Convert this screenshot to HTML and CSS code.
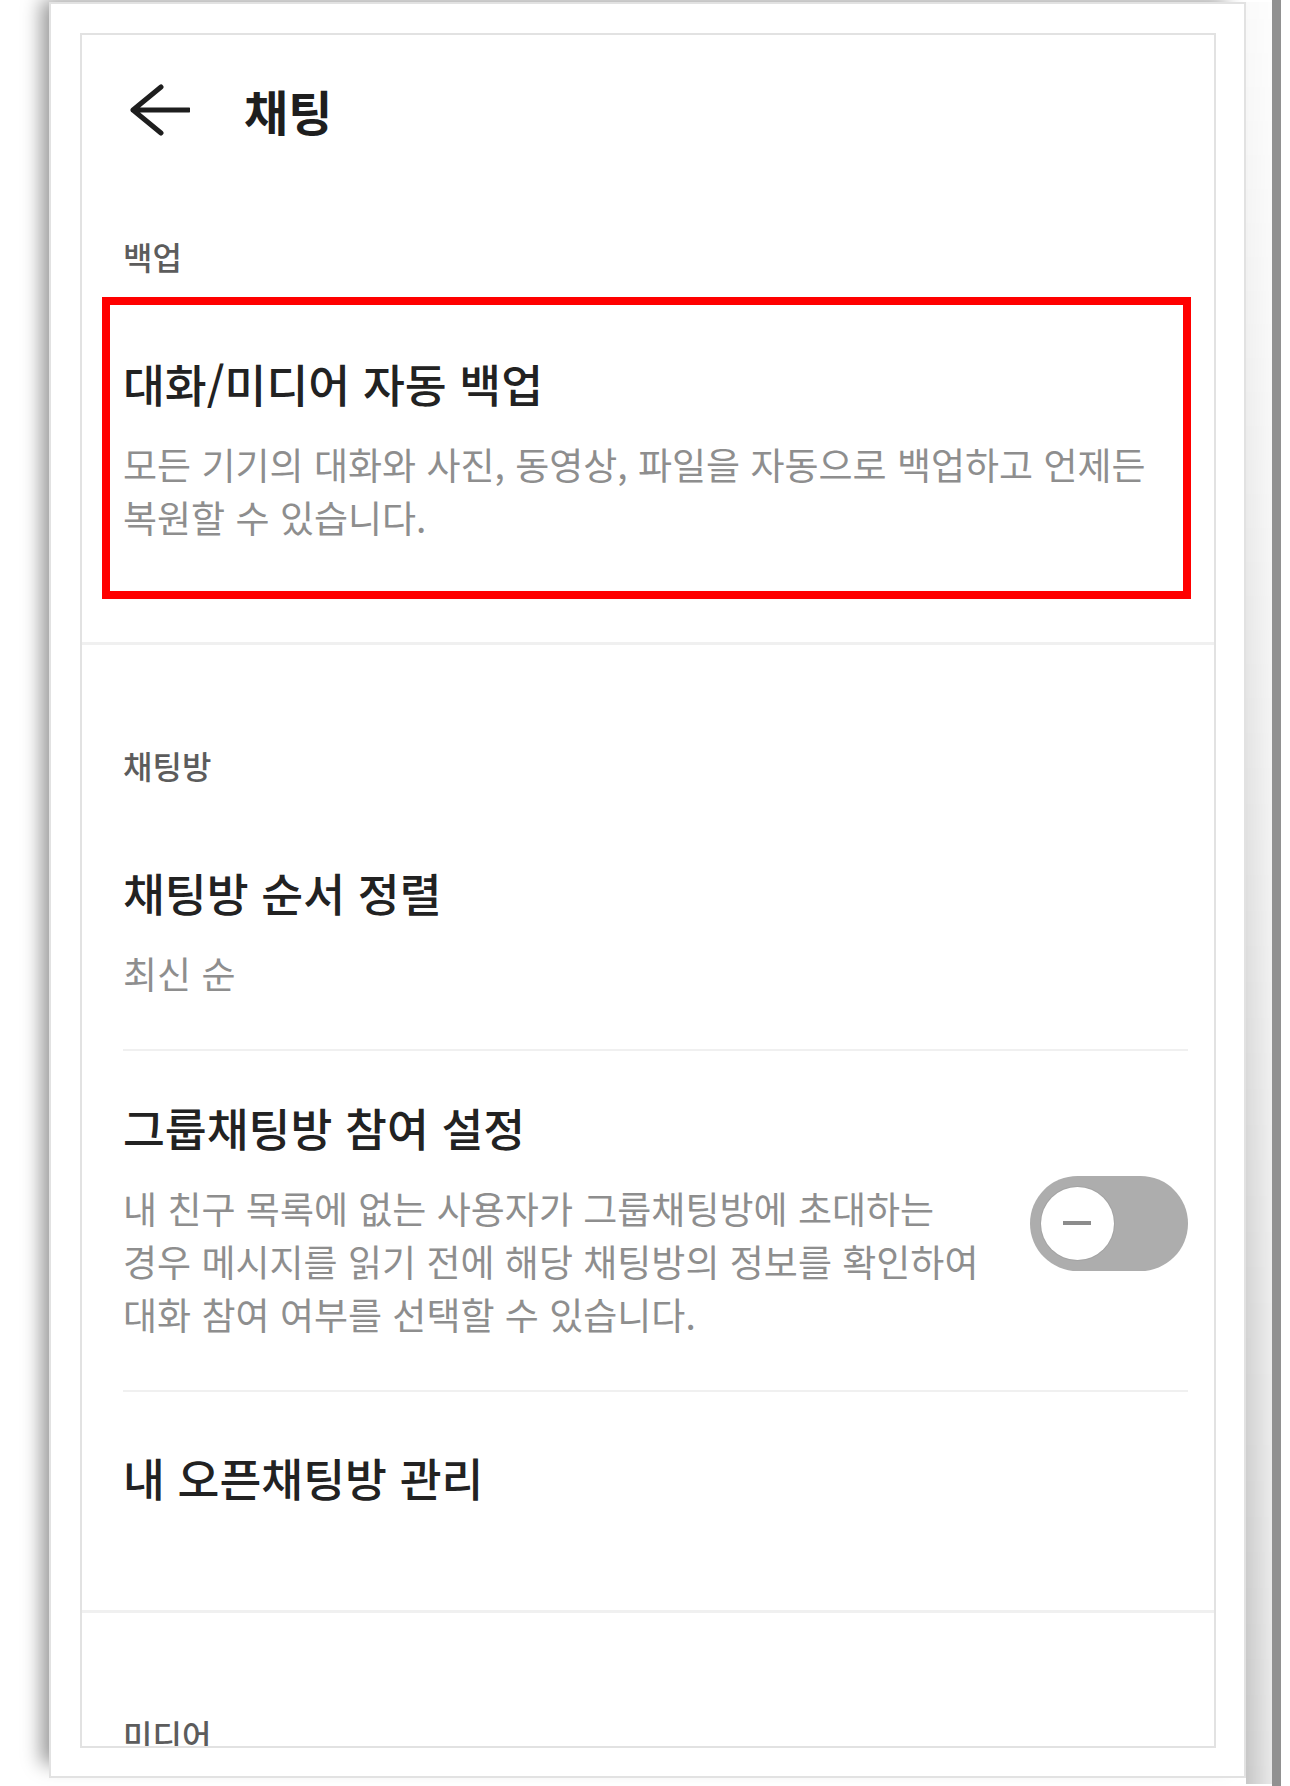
FILE: index.html
```html
<!DOCTYPE html>
<html lang="ko">
<head>
    <meta charset="UTF-8">
    <meta name="viewport" content="width=device-width, initial-scale=1.0">
    <title>채팅 설정</title>
    <link rel="stylesheet" href="styles.css">
</head>
<body>
    <div class="frame">
        <div class="screen">
            <header class="topbar">
                <svg class="back" width="60" height="52" viewBox="0 0 60 52" aria-hidden="true">
                    <path d="M31 3 L3 26 L31 49 M3 26 H59" />
                </svg>
                <h1>채팅</h1>
            </header>

            <!-- 백업 -->
            <section class="group group-first">
                <h2 class="group-label">백업</h2>
                <div class="item item-marked">
                    <div class="item-title">대화/미디어 자동 백업</div>
                    <p class="item-desc">모든 기기의 대화와 사진, 동영상, 파일을 자동으로 백업하고 언제든 복원할 수 있습니다.</p>
                </div>
            </section>

            <!-- 채팅방 -->
            <section class="group">
                <h2 class="group-label">채팅방</h2>
                <div class="item">
                    <div class="item-title">채팅방 순서 정렬</div>
                    <p class="item-desc">최신 순</p>
                </div>
                <div class="item item-switch">
                    <div class="item-text">
                        <div class="item-title">그룹채팅방 참여 설정</div>
                        <p class="item-desc">내 친구 목록에 없는 사용자가 그룹채팅방에 초대하는 경우 메시지를 읽기 전에 해당 채팅방의 정보를 확인하여 대화 참여 여부를 선택할 수 있습니다.</p>
                    </div>
                    <span class="switch"><span class="knob"></span></span>
                </div>
                <div class="item item-last">
                    <div class="item-title">내 오픈채팅방 관리</div>
                </div>
            </section>

            <!-- 미디어 -->
            <section class="group group-media">
                <h2 class="group-label">미디어</h2>
            </section>
        </div>
    </div>
</body>
</html>
```

FILE: styles.css
```css
:root {
    --text-strong: #222;
    --text-label: #5c5c5c;
    --text-sub: #8e8e8e;
    --line: #f0f0f0;
    --frame-line: #e2e2e2;
}

* {
    margin: 0;
    padding: 0;
    box-sizing: border-box;
}

body {
    width: 1290px;
    height: 1786px;
    overflow: hidden;
    padding-top: 2px;
    font-family: "Noto Sans CJK KR", "Noto Sans", sans-serif;
    word-break: keep-all;
    color: var(--text-strong);
    background: linear-gradient(90deg, #fff 1272px, #919191 1272px, #919191 1281px, #fff 1281px);
}

.frame {
    position: relative;
    width: 1197px;
    height: 1776px;
    margin-left: 49px;
    padding: 29px 28px 28px 29px;
    background: #fff;
    border: 2px solid var(--frame-line);
    box-shadow: -14px -8px 18px -6px rgba(0,0,0,0.4);
}

/* soft shadow on the right, darker towards the bottom */
.frame::after {
    content: "";
    position: absolute;
    top: -2px;
    right: -28px;
    bottom: -8px;
    width: 26px;
    background: linear-gradient(180deg, rgba(0,0,0,0.02), rgba(0,0,0,0.1) 40%, rgba(0,0,0,0.22));
    -webkit-mask-image: linear-gradient(90deg, #000, rgba(0,0,0,0.4));
    mask-image: linear-gradient(90deg, #000, rgba(0,0,0,0.4));
}

.screen {
    height: 100%;
    border: 2px solid var(--frame-line);
    overflow: hidden;
}

.topbar {
    height: 150px;
    display: flex;
    align-items: center;
    gap: 54px;
    padding-left: 48px;
}

.back {
    flex: none;
    fill: none;
    stroke: #1e1e1e;
    stroke-width: 5;
    stroke-linecap: round;
    stroke-linejoin: round;
}

.topbar h1 {
    font-size: 48px;
    font-weight: 700;
    line-height: 1;
    color: #1e1e1e;
}

.group {
    padding: 100px 26px 43px 41px;
    border-bottom: 3px solid var(--line);
}

.group-first {
    padding-top: 51px;
}

.group-media {
    padding-top: 101px;
    border-bottom: none;
}

.group-label {
    font-size: 32px;
    font-weight: 500;
    line-height: 40px;
    color: var(--text-label);
    margin-bottom: 31px;
}

.item {
    padding: 48px 0 49px;
    border-bottom: 2px solid var(--line);
}

.item-title {
    font-size: 45.5px;
    font-weight: 500;
    line-height: 56px;
    color: var(--text-strong);
}

.item-desc {
    margin-top: 27px;
    font-size: 37px;
    line-height: 53px;
    color: var(--text-sub);
}

.item-marked {
    margin: -10px -3px 0 -21px;
    padding: 50px 0 47px 13px;
    border: 8px solid #ff0000;
}

.item-switch {
    display: flex;
    align-items: center;
    gap: 37px;
}

.item-text {
    flex: 1;
}

.item-last {
    padding: 57px 0 62px;
    border-bottom: none;
}

.switch {
    flex: none;
    width: 158px;
    height: 95px;
    margin-top: 6px;
    padding: 11px;
    border-radius: 48px;
    background: #adadad;
}

.knob {
    position: relative;
    display: block;
    width: 73px;
    height: 73px;
    border-radius: 50%;
    background: #fff;
    box-shadow: 0 0 0 1px rgba(0,0,0,0.06);
}

.knob::after {
    content: "";
    position: absolute;
    left: 22px;
    top: 34px;
    width: 28px;
    height: 4px;
    background: #8c8c8c;
}
```
